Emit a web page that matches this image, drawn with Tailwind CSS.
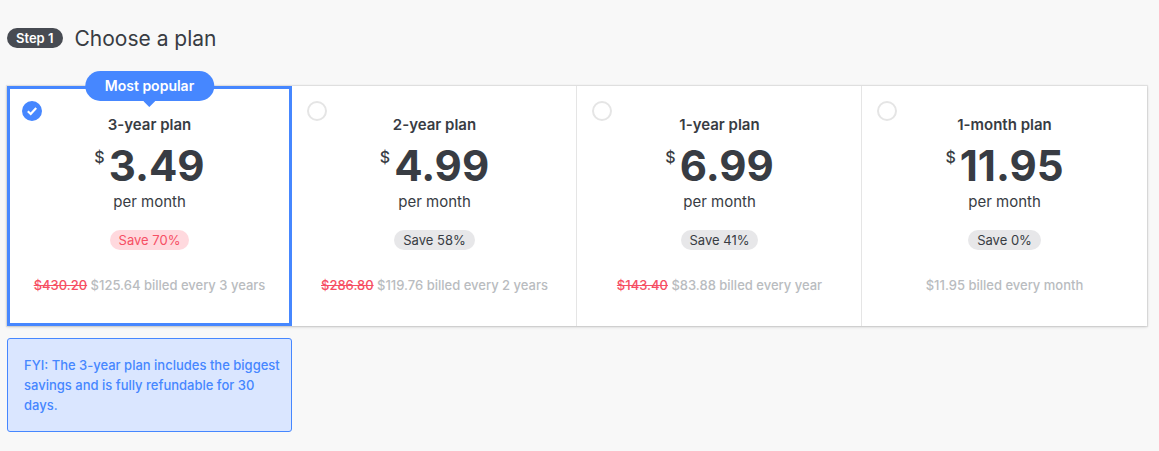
<!DOCTYPE html>
<html lang="en">
<head>
    <meta charset="UTF-8">
    <meta name="viewport" content="width=device-width, initial-scale=1.0">
    <title>Choose a plan</title>
    <script src="https://cdn.jsdelivr.net/npm/@tailwindcss/browser@4"></script>
</head>
<body class="bg-[#f8f8f8] font-['Inter',sans-serif] text-[#383c43] min-h-screen">
    <main class="pl-[7px] pr-3 pt-6 pb-5">
        <header class="flex items-center gap-3 h-7">
            <span class="rounded-full bg-[#474b52] px-[9px] text-[13px] leading-5 font-semibold text-white">Step 1</span>
            <h1 class="text-[21px] leading-7 pt-px">Choose a plan</h1>
        </header>

        <form>
            <div class="mt-[34px] grid grid-cols-4 bg-white shadow-[0_0_1px_1px_rgba(0,0,0,0.08),0_1px_3px_rgba(0,0,0,0.15)]">
                <label class="relative flex flex-col items-center pt-7 pb-[31px] has-checked:inset-ring-3 inset-ring-[#4687ff]">
                    <input type="radio" name="plan" value="36" checked class="peer absolute left-[15px] top-[15px] size-5 appearance-none rounded-full border-2 border-[#e5e5e5] checked:border-[#4687ff] checked:bg-[#4687ff]">
                    <svg class="absolute left-[15px] top-[15px] size-5 hidden peer-checked:block pointer-events-none" viewBox="0 0 20 20" fill="none" stroke="#fff" stroke-width="2.2"><path d="M5.8 10.3 8.7 13 14.2 7"/></svg>
                    <span class="absolute -top-[15px] left-1/2 -translate-x-1/2 rounded-full bg-[#4687ff] px-5 text-[14px] leading-[30px] font-semibold text-white whitespace-nowrap">
                        Most popular
                        <svg class="absolute left-1/2 top-full -translate-x-1/2 w-3 h-[6px]" viewBox="0 0 12 6" fill="#4687ff"><path d="M0 0h12L6 6z"/></svg>
                    </span>
                    <span class="text-[15px] leading-[22px] font-semibold">3-year plan</span>
                    <span class="flex items-start gap-1 h-14">
                        <span class="mt-[11px] text-[16px] leading-5 font-medium">$</span>
                        <span class="text-[42px] leading-[60px] font-bold">3.49</span>
                    </span>
                    <span class="text-[15px] leading-5">per month</span>
                    <span class="mt-[18px] rounded-full bg-[#ffd9de] px-[9px] text-[13px] leading-5 text-[#f64f64]">Save 70%</span>
                    <span class="mt-[25px] text-[13px] leading-5 font-medium text-[#b9bcc0]"><s class="text-[#f64f64]">$430.20</s> $125.64 billed every 3 years</span>
                </label>

                <label class="relative flex flex-col items-center pt-7 pb-[31px] has-checked:inset-ring-3 inset-ring-[#4687ff]">
                    <input type="radio" name="plan" value="24" class="peer absolute left-[15px] top-[15px] size-5 appearance-none rounded-full border-2 border-[#e5e5e5] checked:border-[#4687ff] checked:bg-[#4687ff]">
                    <svg class="absolute left-[15px] top-[15px] size-5 hidden peer-checked:block pointer-events-none" viewBox="0 0 20 20" fill="none" stroke="#fff" stroke-width="2.2"><path d="M5.8 10.3 8.7 13 14.2 7"/></svg>
                    <span class="text-[15px] leading-[22px] font-semibold">2-year plan</span>
                    <span class="flex items-start gap-1 h-14">
                        <span class="mt-[11px] text-[16px] leading-5 font-medium">$</span>
                        <span class="text-[42px] leading-[60px] font-bold">4.99</span>
                    </span>
                    <span class="text-[15px] leading-5">per month</span>
                    <span class="mt-[18px] rounded-full bg-[#e7e7e9] px-[9px] text-[13px] leading-5">Save 58%</span>
                    <span class="mt-[25px] text-[13px] leading-5 font-medium text-[#b9bcc0]"><s class="text-[#f64f64]">$286.80</s> $119.76 billed every 2 years</span>
                </label>

                <label class="relative flex flex-col items-center pt-7 pb-[31px] shadow-[-1px_0_0_#e5e5e5] has-checked:inset-ring-3 inset-ring-[#4687ff]">
                    <input type="radio" name="plan" value="12" class="peer absolute left-[15px] top-[15px] size-5 appearance-none rounded-full border-2 border-[#e5e5e5] checked:border-[#4687ff] checked:bg-[#4687ff]">
                    <svg class="absolute left-[15px] top-[15px] size-5 hidden peer-checked:block pointer-events-none" viewBox="0 0 20 20" fill="none" stroke="#fff" stroke-width="2.2"><path d="M5.8 10.3 8.7 13 14.2 7"/></svg>
                    <span class="text-[15px] leading-[22px] font-semibold">1-year plan</span>
                    <span class="flex items-start gap-1 h-14">
                        <span class="mt-[11px] text-[16px] leading-5 font-medium">$</span>
                        <span class="text-[42px] leading-[60px] font-bold">6.99</span>
                    </span>
                    <span class="text-[15px] leading-5">per month</span>
                    <span class="mt-[18px] rounded-full bg-[#e7e7e9] px-[9px] text-[13px] leading-5">Save 41%</span>
                    <span class="mt-[25px] text-[13px] leading-5 font-medium text-[#b9bcc0]"><s class="text-[#f64f64]">$143.40</s> $83.88 billed every year</span>
                </label>

                <label class="relative flex flex-col items-center pt-7 pb-[31px] shadow-[-1px_0_0_#e5e5e5] has-checked:inset-ring-3 inset-ring-[#4687ff]">
                    <input type="radio" name="plan" value="1" class="peer absolute left-[15px] top-[15px] size-5 appearance-none rounded-full border-2 border-[#e5e5e5] checked:border-[#4687ff] checked:bg-[#4687ff]">
                    <svg class="absolute left-[15px] top-[15px] size-5 hidden peer-checked:block pointer-events-none" viewBox="0 0 20 20" fill="none" stroke="#fff" stroke-width="2.2"><path d="M5.8 10.3 8.7 13 14.2 7"/></svg>
                    <span class="text-[15px] leading-[22px] font-semibold">1-month plan</span>
                    <span class="flex items-start gap-1 h-14">
                        <span class="mt-[11px] text-[16px] leading-5 font-medium">$</span>
                        <span class="text-[42px] leading-[60px] font-bold">11.95</span>
                    </span>
                    <span class="text-[15px] leading-5">per month</span>
                    <span class="mt-[18px] rounded-full bg-[#e7e7e9] px-[9px] text-[13px] leading-5">Save 0%</span>
                    <span class="mt-[25px] text-[13px] leading-5 font-medium text-[#b9bcc0]">$11.95 billed every month</span>
                </label>
            </div>
        </form>

        <div class="mt-3 grid grid-cols-4">
            <p class="rounded-[3px] border border-[#4687ff] bg-[#dae6ff] pl-4 pr-2 py-4 text-[13px] leading-5 font-medium text-[#4687ff]">FYI: The 3-year plan includes the biggest savings and is fully refundable for 30 days.</p>
        </div>
    </main>
</body>
</html>
